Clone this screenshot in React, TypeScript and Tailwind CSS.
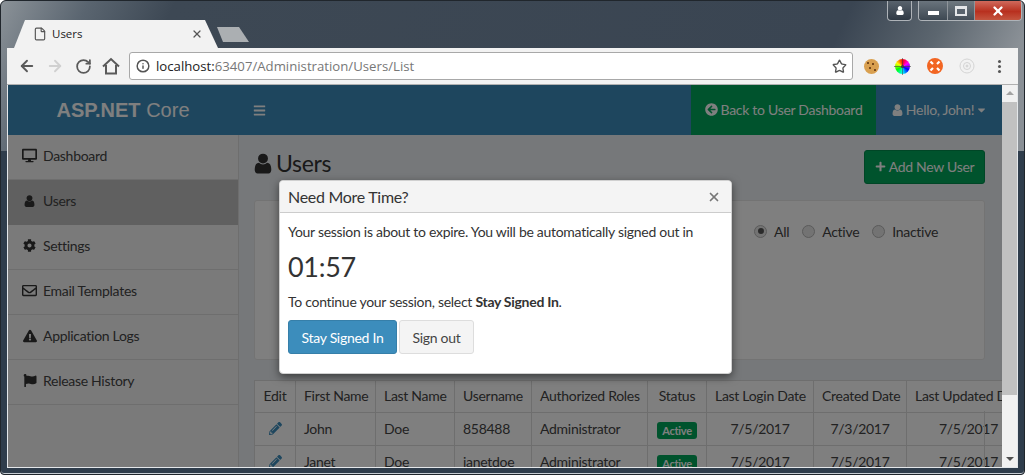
import { ArrowLeft, ArrowRight, File, Info, RotateCw, Star, X } from 'lucide-react';
import {
  FaArrowCircleLeft,
  FaBars,
  FaCaretDown,
  FaCog,
  FaDesktop,
  FaExclamationTriangle,
  FaFlag,
  FaPencilAlt,
  FaPlus,
  FaRegEnvelope,
} from 'react-icons/fa';

function UserIcon({ className }: { className?: string }) {
  return (
    <svg viewBox="200 110 1392 1560" className={className} fill="currentColor">
      <path d="M1536 1399q0 109-62.500 187t-150.500 78h-854q-88 0-150.500-78t-62.500-187q0-85 8.500-160.500t31.500-151.500 58.500-130 94-88.500 134.500-34.500q131 128 313 128t313-128q76 0 134.500 34.500t94 88.500 58.500 130 31.500 151.500 8.500 160.500zm-256-887q0 159-112.500 271.500t-271.500 112.500-271.500-112.500-112.500-271.500 112.500-271.500 271.500-112.500 271.500 112.500 112.500 271.500z" />
    </svg>
  );
}

function HomeIcon() {
  return (
    <svg viewBox="0 0 18 18" className="ml-[10px] h-[18px] w-[18px] text-[#5a5a5a]" fill="none" stroke="currentColor" strokeWidth="2">
      <path d="M1 9.500 9 2l8 7.500" />
      <path d="M4 8v8.500h10V8" />
    </svg>
  );
}

const navItems = [
  { label: 'Dashboard', icon: <FaDesktop className="h-[15px] w-[15px]" /> },
  { label: 'Users', icon: <UserIcon className="h-[12px] w-[11px]" />, active: true },
  { label: 'Settings', icon: <FaCog className="h-[13px] w-[13px]" /> },
  { label: 'Email Templates', icon: <FaRegEnvelope className="h-[15px] w-[15px]" /> },
  { label: 'Application Logs', icon: <FaExclamationTriangle className="h-[14px] w-[14px]" /> },
  { label: 'Release History', icon: <FaFlag className="h-[13px] w-[14px]" /> },
];

const users = [
  ['John', 'Doe', '858488', 'Administrator', '7/5/2017', '7/3/2017', '7/5/2017'],
  ['Janet', 'Doe', 'janetdoe', 'Administrator', '7/5/2017', '7/5/2017', '7/5/2017'],
];

const headers = ['Edit', 'First Name', 'Last Name', 'Username', 'Authorized Roles', 'Status', 'Last Login Date', 'Created Date', 'Last Updated Date'];

function WindowControls() {
  return (
    <div className="absolute right-[2px] top-0 flex gap-[6px]">
      <div className="flex h-[20px] w-[25px] items-center justify-center rounded-b-[4px] border border-t-0 border-[#aeb3b8] bg-[linear-gradient(#59636d,#2f3944)]">
        <UserIcon className="h-[9px] w-[10px] text-white" />
      </div>
      <div className="flex h-[20px] overflow-hidden rounded-b-[4px] border border-t-0 border-[#aeb3b8]">
        <div className="flex w-[29px] items-end justify-center border-r border-[#8f959b] bg-[linear-gradient(#6a747d,#3d4852)] pb-[5px]">
          <div className="h-[4px] w-[11px] bg-white" />
        </div>
        <div className="flex w-[27px] items-center justify-center border-r border-[#8f959b] bg-[linear-gradient(#6f7980,#454f59)]">
          <div className="h-[10px] w-[12px] border-2 border-t-[3px] border-[#e4e6e8] bg-[#59636d]" />
        </div>
        <div className="flex w-[46px] items-center justify-center bg-[linear-gradient(#d06a5c,#b8301f_55%,#c4553f)]">
          <X className="h-[14px] w-[14px] text-white" strokeWidth={4} />
        </div>
      </div>
    </div>
  );
}

function Extensions() {
  return (
    <div className="flex items-center">
      <div className="relative ml-[11px] h-[15px] w-[15px] rounded-full bg-[#d9a050]">
        <div className="absolute left-[3px] top-[3px] h-[2px] w-[2px] bg-[#7a4a1c]" />
        <div className="absolute left-[8px] top-[4px] h-[2px] w-[2px] bg-[#7a4a1c]" />
        <div className="absolute left-[5px] top-[8px] h-[2px] w-[2px] bg-[#7a4a1c]" />
        <div className="absolute left-[10px] top-[10px] h-[2px] w-[2px] bg-[#7a4a1c]" />
      </div>
      <div className="relative ml-[16px] flex h-[15px] w-[15px] items-center justify-center rounded-full bg-[conic-gradient(#ff0000,#ff00ff,#0000ff,#00ffff,#00ff00,#ffff00,#ff0000)]">
        <div className="h-[3px] w-[3px] rounded-full bg-[#333]" />
        <div className="absolute left-[-1px] top-[7px] h-px w-[17px] bg-[#444]/60" />
        <div className="absolute left-[7px] top-[-1px] h-[17px] w-px bg-[#444]/60" />
      </div>
      <svg viewBox="0 0 16 16" className="ml-[17px] h-[16px] w-[16px]">
        <circle cx="8" cy="8" r="8" fill="#f26522" />
        <path d="M3.500 3.500l2.500 2.500M12.500 3.500l-2.500 2.500M3.500 12.500l2.500-2.500M12.500 12.500l-2.500-2.500" stroke="#fff" strokeWidth="2.200" />
      </svg>
      <svg viewBox="0 0 16 16" className="ml-[16px] h-[16px] w-[16px] text-[#d4d4d4]" fill="none" stroke="currentColor">
        <circle cx="8" cy="8" r="7" />
        <circle cx="8" cy="8" r="3.500" />
        <circle cx="8" cy="8" r="1" fill="currentColor" />
      </svg>
      <div className="ml-[23px] flex flex-col gap-[2px]">
        <div className="h-[3px] w-[3px] rounded-full bg-[#555]" />
        <div className="h-[3px] w-[3px] rounded-full bg-[#555]" />
        <div className="h-[3px] w-[3px] rounded-full bg-[#555]" />
      </div>
    </div>
  );
}

function Radio({ label, checked }: { label: string; checked?: boolean }) {
  return (
    <label className="flex items-center gap-[7px]">
      <span className="flex h-[13px] w-[13px] items-center justify-center rounded-full border border-[#b5b5b5] bg-[#e6e6e6]">
        {checked && <span className="h-[6px] w-[6px] rounded-full bg-[#555]" />}
      </span>
      {label}
    </label>
  );
}

export default function App() {
  return (
    <div className="relative flex h-[475px] w-[1025px] flex-col overflow-hidden rounded-t-[6px] rounded-b-[4px] border border-[#20262c] px-[6px] pb-[6px] font-['Lato',sans-serif] text-[14px] tracking-[-0.29px] text-[#333] shadow-[inset_0_-1px_0_#c8ced4] [background:linear-gradient(115deg,#8b9298_0%,#5a6570_8%,#3d4854_16%,#3a4552_78%,#5c666f_87%,#8a9096_95%)_top/100%_150px_no-repeat,#2f3d4c]">
      <WindowControls />

      {/* tab strip */}
      <div className="flex h-[47px] shrink-0 items-end tracking-normal">
        <div className="ml-[7px] flex h-[28px] w-[204px] items-center bg-[#f2f2f2] pl-[19px] pr-[15px] [clip-path:polygon(0_100%,11px_0,191px_0,100%_100%)]">
          <File className="h-[14px] w-[14px] text-[#555]" />
          <span className="ml-[5px] flex-1 font-['Open_Sans',sans-serif] text-[11.5px] text-[#222]">Users</span>
          <X className="h-[12px] w-[12px] text-[#555]" strokeWidth={2.5} />
        </div>
        <div className="mb-[6px] ml-[-1px] h-[15px] w-[32px] bg-[#abafb2] [clip-path:polygon(0_0,22px_0,100%_100%,6px_100%)]" />
      </div>

      {/* toolbar */}
      <div className="flex h-[37px] shrink-0 items-center border-b border-[#b0b0b0] bg-[#f2f2f2] pl-[11px] tracking-normal">
        <ArrowLeft className="h-[18px] w-[18px] text-[#5a5a5a]" strokeWidth={2.5} />
        <ArrowRight className="ml-[10px] h-[18px] w-[18px] text-[#d0d0d0]" strokeWidth={2.5} />
        <RotateCw className="ml-[11px] h-[17px] w-[17px] text-[#5a5a5a]" strokeWidth={2.5} />
        <HomeIcon />
        <div className="ml-[9px] flex h-[28px] w-[724px] items-center rounded-[3px] border border-[#a8a8a8] bg-white pl-[6px] pr-[5px] font-['Open_Sans',sans-serif] text-[13.2px]">
          <Info className="h-[14px] w-[14px] text-[#555]" strokeWidth={2.5} />
          <span className="ml-[6px] flex-1 pt-[1px] text-[#222]">
            localhost:<span className="text-[#777]">63407/Administration/Users/List</span>
          </span>
          <Star className="h-[15px] w-[15px] text-[#555]" strokeWidth={2.2} />
        </div>
        <Extensions />
      </div>

      {/* page */}
      <div className="flex min-h-0 flex-1 border-x border-b border-[#e4e7ea]">
        <div className="relative flex min-w-0 flex-1 flex-col overflow-hidden bg-[#ecf0f5]">
          <header className="flex h-[50px] shrink-0 items-center bg-[#3c8dbc] text-white">
            <div className="w-[230px] text-center font-['Liberation_Sans',sans-serif] text-[20px] tracking-normal">
              <b>ASP.NET</b> Core
            </div>
            <FaBars className="ml-[15px] h-[13px] w-[13px]" />
            <div className="flex-1" />
            <div className="flex h-full w-[185px] items-center justify-center gap-[3px] bg-[#00a65a] pb-[1px]">
              <FaArrowCircleLeft className="h-[13px] w-[13px]" />
              Back to User Dashboard
            </div>
            <div className="flex w-[126px] items-center justify-center gap-[3px] pb-[1px]">
              <UserIcon className="h-[12px] w-[11px]" />
              Hello, John!
              <FaCaretDown className="h-[12px] w-[9px]" />
            </div>
          </header>

          <div className="flex min-h-0 flex-1">
            <aside className="w-[231px] shrink-0 border-r border-[#ddd] bg-[#f4f4f4]">
              {navItems.map((item) => (
                <div
                  key={item.label}
                  className={`flex h-[45px] items-center border-b pb-[3px] ${item.active ? 'border-[#c0c0c0] bg-[#c0c0c0]' : 'border-[#dcdcdc]'}`}
                >
                  <span className="flex w-[35px] justify-center pl-[8px] text-[#333]">{item.icon}</span>
                  <span className="text-[#444]">{item.label}</span>
                </div>
              ))}
            </aside>

            <main className="min-w-0 flex-1 pl-[15px]">
              <div className="flex h-[65px] items-start justify-between pr-[17px]">
                <h1 className="mt-[13px] flex items-center gap-[4px] text-[23px] leading-[30px] text-[#333]">
                  <UserIcon className="h-[21px] w-[18px]" />
                  Users
                </h1>
                <button className="mt-[15px] flex h-[34px] w-[121px] items-center justify-center gap-[3px] rounded-[3px] border border-[#008d4c] bg-[#00a65a] pb-[1px] text-white">
                  <FaPlus className="h-[11px] w-[11px]" />
                  Add New User
                </button>
              </div>

              <section className="mr-[17px] flex h-[160px] justify-end rounded-[3px] border border-[#e6e6e6] bg-white pr-[46px] pt-[20px]">
                <div className="flex h-[20px] items-center gap-[13px] text-[#444]">
                  <Radio label="All" checked />
                  <Radio label="Active" />
                  <Radio label="Inactive" />
                </div>
              </section>

              <div className="relative mt-[20px] overflow-hidden">
                <table className="w-[776px] table-fixed border-collapse bg-white text-[#444]">
                  <colgroup>
                    <col className="w-[41px]" />
                    <col className="w-[80px]" />
                    <col className="w-[79px]" />
                    <col className="w-[77px]" />
                    <col className="w-[116px]" />
                    <col className="w-[59px]" />
                    <col className="w-[107px]" />
                    <col className="w-[93px]" />
                    <col className="w-[124px]" />
                  </colgroup>
                  <thead>
                    <tr className="h-[32px]">
                      {headers.map((h) => (
                        <th key={h} className="overflow-hidden whitespace-nowrap border border-[#ddd] px-[8px] pb-[2px] text-center font-normal">
                          {h}
                        </th>
                      ))}
                    </tr>
                  </thead>
                  <tbody>
                    {users.map((u) => (
                      <tr key={u[2]} className="h-[33px]">
                        <td className="border border-[#ddd] pb-[2px] text-center text-[#3c8dbc]">
                          <FaPencilAlt className="mx-auto h-[13px] w-[13px]" />
                        </td>
                        {u.slice(0, 4).map((v, i) => (
                          <td key={i} className="border border-[#ddd] px-[8px] pb-[2px]">{v}</td>
                        ))}
                        <td className="border border-[#ddd] text-center">
                          <span className="inline-block rounded-[3px] bg-[#00a65a] px-[5px] text-[11px] font-bold leading-[17px] text-white">Active</span>
                        </td>
                        <td className="border border-[#ddd] pb-[2px] text-center">{u[4]}</td>
                        <td className="border border-[#ddd] pb-[2px] text-center">{u[5]}</td>
                        <td className="border border-[#ddd] pb-[2px] text-center">{u[6]}</td>
                      </tr>
                    ))}
                  </tbody>
                </table>
                <div className="absolute right-[17px] top-[31px] h-[70px] w-px bg-[#ddd]" />
              </div>
            </main>
          </div>

          {/* session timeout dialog */}
          <div className="absolute inset-0 bg-black/50" />
          <div className="absolute left-[271px] top-[95px] w-[453px] rounded-[4px] border border-[#d0d0d0] bg-white shadow-[0_3px_9px_rgba(0,0,0,0.5)]">
            <div className="flex h-[32px] items-center justify-between rounded-t-[4px] border-b border-[#ccc] bg-[#f4f4f4] pl-[8px] pr-[10px] pt-[1px]">
              <span className="text-[16px] text-[#333]">Need More Time?</span>
              <X className="h-[14px] w-[14px] text-[#777]" strokeWidth={3} />
            </div>
            <div className="px-[8px] pb-[19px] pt-[9px] text-[#333]">
              <p className="leading-[20px]">Your session is about to expire. You will be automatically signed out in</p>
              <p className="mt-[8px] text-[27px] leading-[34px]">01:57</p>
              <p className="mt-[8px] leading-[20px]">
                To continue your session, select <b>Stay Signed In</b>.
              </p>
              <div className="mt-[8px] flex gap-[2px]">
                <button className="h-[34px] w-[109px] rounded-[3px] border border-[#367fa9] bg-[#3c8dbc] text-white">Stay Signed In</button>
                <button className="h-[34px] w-[75px] rounded-[3px] border border-[#ddd] bg-[#f4f4f4] text-[#444]">Sign out</button>
              </div>
            </div>
          </div>
        </div>

        {/* scrollbar */}
        <div className="flex w-[15px] shrink-0 flex-col items-center bg-[#f1f1f1]">
          <div className="mt-[6px] h-0 w-0 border-x-[4px] border-b-[4px] border-x-transparent border-b-[#a3a3a3]" />
          <div className="mt-[7px] h-[293px] w-full bg-[#c1c1c1]" />
          <div className="flex-1" />
          <div className="mb-[6px] h-0 w-0 border-x-[4px] border-t-[4px] border-x-transparent border-t-[#505050]" />
        </div>
      </div>
    </div>
  );
}
